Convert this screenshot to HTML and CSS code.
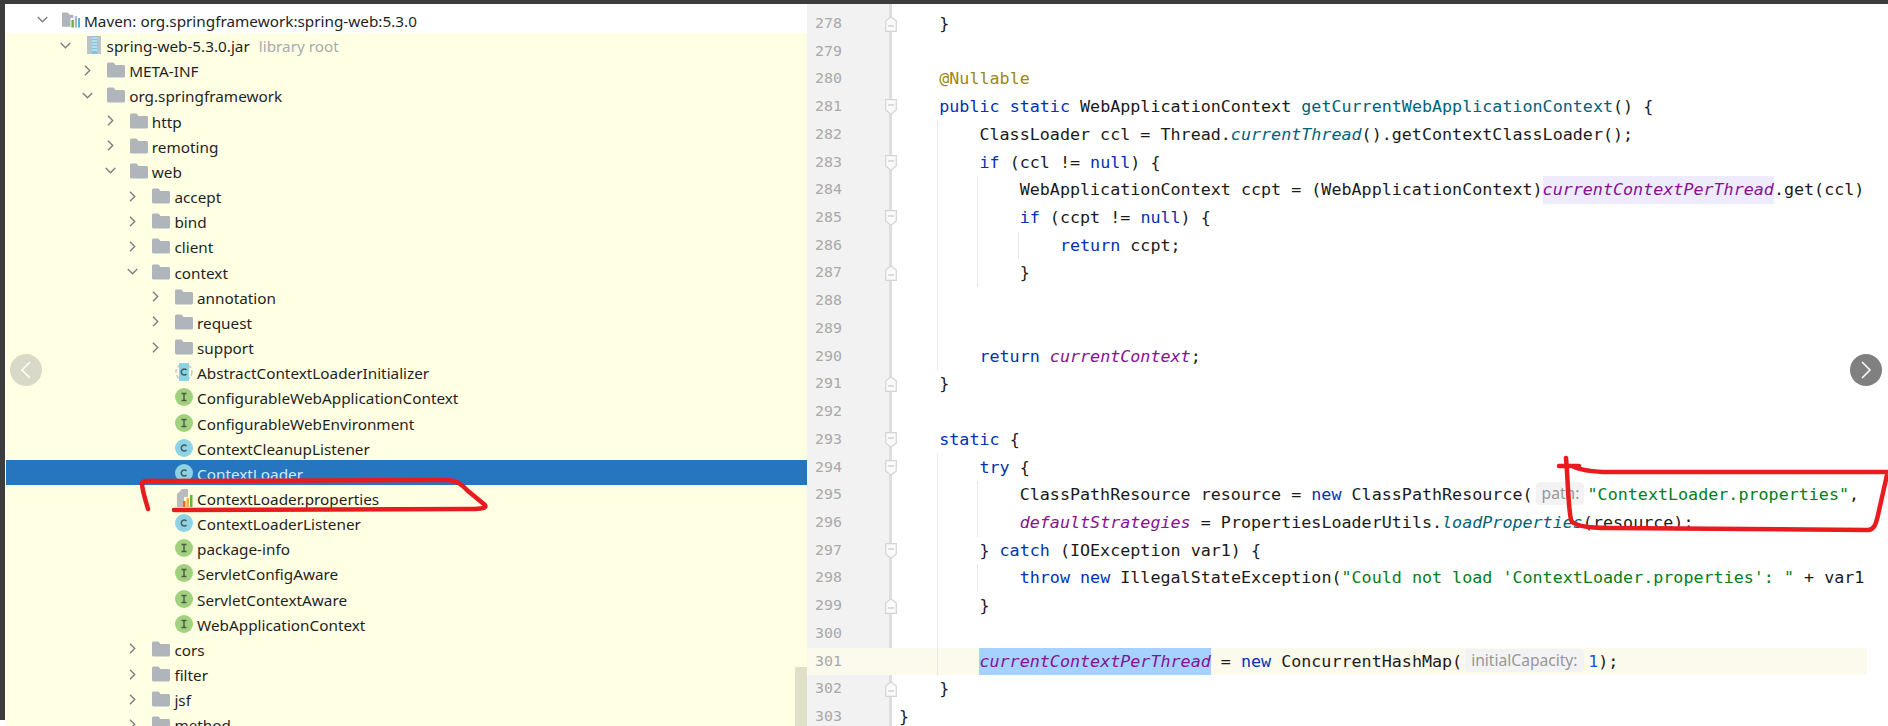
FILE: index.html
```html
<!DOCTYPE html>
<html lang="en">
<head>
  <meta charset="UTF-8">
  <title>ContextLoader.java</title>
  <link rel="stylesheet" href="styles.css">
</head>
<body>
  <svg class="defs" width="0" height="0">
    <symbol id="folder" viewBox="0 0 18 15"><path d="M0 1.5C0 .7.7 0 1.500 0H6.500L8.500 2.500H16.500C17.300 2.500 18 3.200 18 4V13.500C18 14.300 17.300 15 16.500 15H1.500C.7 15 0 14.300 0 13.500Z" fill="#afb5ba"/></symbol>
    <symbol id="maven" viewBox="0 0 19 16"><path d="M0 1C0 .4.4 0 1 0H6L8 2.500H12V6H9V15H0Z" fill="#afb5ba"/><rect x="10" y="8" width="2.500" height="8" fill="#62b543"/><rect x="13.500" y="4" width="2.500" height="12" fill="#afb5ba"/><rect x="17" y="6" width="2.500" height="10" fill="#40b6e0"/></symbol>
    <symbol id="jar" viewBox="0 0 14 18"><rect width="14" height="18" fill="#b9c4ca"/><rect x="5" width="5" height="18" fill="#7fc4dc"/><path d="M5 2H10M5 5H10M5 8H10M5 11H10M5 14H10" stroke="#eef6f8" stroke-width="1.200"/></symbol>
    <symbol id="cls" viewBox="0 0 18 18"><circle cx="9" cy="9" r="9" fill="#8cd3e6"/><path d="M11.500 7A3 3 0 1 0 11.500 11" fill="none" stroke="#4a5a60" stroke-width="1.500"/></symbol>
    <symbol id="abstract" viewBox="0 0 18 18"><circle cx="9" cy="9" r="8" fill="none" stroke="#c8c8c8" stroke-width="1.500" stroke-dasharray="4 2"/><rect x="4" y="0" width="10" height="18" fill="#8cd3e6"/><path d="M11.500 7A3 3 0 1 0 11.500 11" fill="none" stroke="#4a5a60" stroke-width="1.500"/></symbol>
    <symbol id="iface" viewBox="0 0 18 18"><circle cx="9" cy="9" r="9" fill="#a1d07f"/><path d="M6.500 5.500H11.500M6.500 12.500H11.500M9 5.500V12.500" fill="none" stroke="#4c5a44" stroke-width="1.400"/></symbol>
    <symbol id="props" viewBox="0 0 18 18"><path d="M2 5L7 0H13V8H9V18H2Z" fill="#b9bcbe"/><rect x="8" y="12" width="2.500" height="6" fill="#f26522"/><rect x="11.500" y="9" width="2.500" height="9" fill="#f4af3d"/><rect x="15" y="6" width="2.500" height="12" fill="#62b543"/></symbol>
    <symbol id="open" viewBox="0 0 10 6"><path d="M.7.7L5 5L9.300.7" fill="none" stroke="#7c7f82" stroke-width="1.300"/></symbol>
    <symbol id="shut" viewBox="0 0 6 10"><path d="M.7.7L5 5L.7 9.300" fill="none" stroke="#7c7f82" stroke-width="1.300"/></symbol>
    <symbol id="fold-down" viewBox="0 0 12 16"><path d="M.7.7H11.300V11L6 15.300L.7 11Z" fill="#fafafa" stroke="#d4d4d4" stroke-width="1.200"/><path d="M3 6H9" stroke="#c0c0c0"/></symbol>
    <symbol id="fold-up" viewBox="0 0 12 16"><path d="M.7 15.300H11.300V5L6 .7L.7 5Z" fill="#fafafa" stroke="#d4d4d4" stroke-width="1.200"/><path d="M3 10H9" stroke="#c0c0c0"/></symbol>
  </svg>

  <div class="topbar"></div>

  <div class="app">
    <div class="tree">
      <div class="row first l0"><svg class="arrow down"><use href="#open"/></svg><svg class="ico"><use href="#maven"/></svg><span>Maven: org.springframework:spring-web:5.3.0</span></div>
      <div class="row l1"><svg class="arrow down"><use href="#open"/></svg><svg class="ico"><use href="#jar"/></svg><span>spring-web-5.3.0.jar</span><span class="muted">library root</span></div>
      <div class="row l2"><svg class="arrow"><use href="#shut"/></svg><svg class="ico"><use href="#folder"/></svg><span>META-INF</span></div>
      <div class="row l2"><svg class="arrow down"><use href="#open"/></svg><svg class="ico"><use href="#folder"/></svg><span>org.springframework</span></div>
      <div class="row l3"><svg class="arrow"><use href="#shut"/></svg><svg class="ico"><use href="#folder"/></svg><span>http</span></div>
      <div class="row l3"><svg class="arrow"><use href="#shut"/></svg><svg class="ico"><use href="#folder"/></svg><span>remoting</span></div>
      <div class="row l3"><svg class="arrow down"><use href="#open"/></svg><svg class="ico"><use href="#folder"/></svg><span>web</span></div>
      <div class="row l4"><svg class="arrow"><use href="#shut"/></svg><svg class="ico"><use href="#folder"/></svg><span>accept</span></div>
      <div class="row l4"><svg class="arrow"><use href="#shut"/></svg><svg class="ico"><use href="#folder"/></svg><span>bind</span></div>
      <div class="row l4"><svg class="arrow"><use href="#shut"/></svg><svg class="ico"><use href="#folder"/></svg><span>client</span></div>
      <div class="row l4"><svg class="arrow down"><use href="#open"/></svg><svg class="ico"><use href="#folder"/></svg><span>context</span></div>
      <div class="row l5"><svg class="arrow"><use href="#shut"/></svg><svg class="ico"><use href="#folder"/></svg><span>annotation</span></div>
      <div class="row l5"><svg class="arrow"><use href="#shut"/></svg><svg class="ico"><use href="#folder"/></svg><span>request</span></div>
      <div class="row l5"><svg class="arrow"><use href="#shut"/></svg><svg class="ico"><use href="#folder"/></svg><span>support</span></div>
      <div class="row l5"><i class="arrow"></i><svg class="ico"><use href="#abstract"/></svg><span>AbstractContextLoaderInitializer</span></div>
      <div class="row l5"><i class="arrow"></i><svg class="ico"><use href="#iface"/></svg><span>ConfigurableWebApplicationContext</span></div>
      <div class="row l5"><i class="arrow"></i><svg class="ico"><use href="#iface"/></svg><span>ConfigurableWebEnvironment</span></div>
      <div class="row l5"><i class="arrow"></i><svg class="ico"><use href="#cls"/></svg><span>ContextCleanupListener</span></div>
      <div class="row l5 selected"><i class="arrow"></i><svg class="ico"><use href="#cls"/></svg><span>ContextLoader</span></div>
      <div class="row l5"><i class="arrow"></i><svg class="ico"><use href="#props"/></svg><span>ContextLoader.properties</span></div>
      <div class="row l5"><i class="arrow"></i><svg class="ico"><use href="#cls"/></svg><span>ContextLoaderListener</span></div>
      <div class="row l5"><i class="arrow"></i><svg class="ico"><use href="#iface"/></svg><span>package-info</span></div>
      <div class="row l5"><i class="arrow"></i><svg class="ico"><use href="#iface"/></svg><span>ServletConfigAware</span></div>
      <div class="row l5"><i class="arrow"></i><svg class="ico"><use href="#iface"/></svg><span>ServletContextAware</span></div>
      <div class="row l5"><i class="arrow"></i><svg class="ico"><use href="#iface"/></svg><span>WebApplicationContext</span></div>
      <div class="row l4"><svg class="arrow"><use href="#shut"/></svg><svg class="ico"><use href="#folder"/></svg><span>cors</span></div>
      <div class="row l4"><svg class="arrow"><use href="#shut"/></svg><svg class="ico"><use href="#folder"/></svg><span>filter</span></div>
      <div class="row l4"><svg class="arrow"><use href="#shut"/></svg><svg class="ico"><use href="#folder"/></svg><span>jsf</span></div>
      <div class="row l4"><svg class="arrow"><use href="#shut"/></svg><svg class="ico"><use href="#folder"/></svg><span>method</span></div>
      <div class="scrollbar"></div>
    </div>

    <div class="code">
      <div class="line"><span class="num">278</span><svg class="fold"><use href="#fold-up"/></svg><code class="src">    }</code></div>
      <div class="line"><span class="num">279</span><code class="src"></code></div>
      <div class="line"><span class="num">280</span><code class="src">    <b class="ann">@Nullable</b></code></div>
      <div class="line"><span class="num">281</span><svg class="fold"><use href="#fold-down"/></svg><code class="src">    <b class="kw">public static</b> WebApplicationContext <b class="fn">getCurrentWebApplicationContext</b>() {</code></div>
      <div class="line"><span class="num">282</span><code class="src g1">        ClassLoader ccl = Thread.<b class="call">currentThread</b>().getContextClassLoader();</code></div>
      <div class="line"><span class="num">283</span><svg class="fold"><use href="#fold-down"/></svg><code class="src g1">        <b class="kw">if</b> (ccl != <b class="kw">null</b>) {</code></div>
      <div class="line"><span class="num">284</span><code class="src g2">            WebApplicationContext ccpt = (WebApplicationContext)<b class="field mark">currentContextPerThread</b>.get(ccl)</code></div>
      <div class="line"><span class="num">285</span><svg class="fold"><use href="#fold-down"/></svg><code class="src g2">            <b class="kw">if</b> (ccpt != <b class="kw">null</b>) {</code></div>
      <div class="line"><span class="num">286</span><code class="src g3">                <b class="kw">return</b> ccpt;</code></div>
      <div class="line"><span class="num">287</span><svg class="fold"><use href="#fold-up"/></svg><code class="src g2">            }</code></div>
      <div class="line"><span class="num">288</span><code class="src g1"></code></div>
      <div class="line"><span class="num">289</span><code class="src g1"></code></div>
      <div class="line"><span class="num">290</span><code class="src g1">        <b class="kw">return</b> <b class="field">currentContext</b>;</code></div>
      <div class="line"><span class="num">291</span><svg class="fold"><use href="#fold-up"/></svg><code class="src">    }</code></div>
      <div class="line"><span class="num">292</span><code class="src"></code></div>
      <div class="line"><span class="num">293</span><svg class="fold"><use href="#fold-down"/></svg><code class="src">    <b class="kw">static</b> {</code></div>
      <div class="line"><span class="num">294</span><svg class="fold"><use href="#fold-down"/></svg><code class="src g1">        <b class="kw">try</b> {</code></div>
      <div class="line"><span class="num">295</span><code class="src g2">            ClassPathResource resource = <b class="kw">new</b> ClassPathResource(<span class="hint path">path:</span><b class="str">"ContextLoader.properties"</b>,</code></div>
      <div class="line"><span class="num">296</span><code class="src g2">            <b class="field">defaultStrategies</b> = PropertiesLoaderUtils.<b class="call">loadProperties</b>(resource);</code></div>
      <div class="line"><span class="num">297</span><svg class="fold"><use href="#fold-down"/></svg><code class="src g1">        } <b class="kw">catch</b> (IOException var1) {</code></div>
      <div class="line"><span class="num">298</span><code class="src g2">            <b class="kw">throw new</b> IllegalStateException(<b class="str">"Could not load 'ContextLoader.properties': "</b> + var1</code></div>
      <div class="line"><span class="num">299</span><svg class="fold"><use href="#fold-up"/></svg><code class="src g1">        }</code></div>
      <div class="line"><span class="num">300</span><code class="src g1"></code></div>
      <div class="line current"><span class="num">301</span><code class="src g1">        <b class="field picked">currentContextPerThread</b> = <b class="kw">new</b> ConcurrentHashMap(<span class="hint cap">initialCapacity:</span><b class="int">1</b>);</code></div>
      <div class="line"><span class="num">302</span><svg class="fold"><use href="#fold-up"/></svg><code class="src">    }</code></div>
      <div class="line"><span class="num">303</span><code class="src">}</code></div>
    </div>
  </div>

  <button class="nav prev"><svg width="12" height="20" viewBox="0 0 12 20"><path d="M10 2L2 10L10 18" fill="none" stroke="#fff" stroke-width="1.500"/></svg></button>
  <button class="nav next"><svg width="12" height="20" viewBox="0 0 12 20"><path d="M2 2L10 10L2 18" fill="none" stroke="#fff" stroke-width="1.500"/></svg></button>

  <!-- red pen marks on top of the screenshot -->
  <svg class="marks" width="1888" height="726" viewBox="0 0 1888 726">
    <path d="M148 509C145 498 142 490 142 483C143 480 150 481 165 481L447 480C456 480 462 484 468 491L485 505C487 508 482 509 470 509L174 510" />
    <path d="M1559 466L1579 466M1566 458C1568 480 1568 505 1571 520C1573 526 1590 528 1610 528L1868 530C1874 530 1876 524 1878 515L1887 475M1572 466C1580 470 1590 472 1610 472L1887 472" />
  </svg>
</body>
</html>
```
FILE: styles.css
```css
* {
  margin: 0;
  padding: 0;
  box-sizing: border-box;
}

html,
body {
  height: 726px;
  overflow: hidden;
}

body {
  position: relative;
  background: linear-gradient(#3c3c3c, #3c3c3c) 0 0 / 5px 720px no-repeat, #fff;
}

.defs {
  position: absolute;
}

.topbar {
  height: 4px;
  background-color: #3c3c3c;
}

.app {
  display: flex;
  height: 722px;
  padding-left: 6px;
}

/* project tree */
.tree {
  position: relative;
  flex: 0 0 801px;
  overflow: hidden;
  background-color: #ffffe4;
  font-family: "Noto Sans", sans-serif;
  font-size: 15.3px;
  color: #1f1f1f;
}

.row {
  display: flex;
  align-items: center;
  height: 25.17px;
  white-space: nowrap;
}

.row span {
  padding-top: 2px;
}

.row.first {
  height: 28.6px;
  padding-top: 3.4px;
  background-color: #fff;
}

.row.selected {
  background-color: #2675bf;
  color: #d3e9f7;
}

.l0 { padding-left: 29px; }
.l1 { padding-left: 51.6px; }
.l2 { padding-left: 74.2px; }
.l3 { padding-left: 96.8px; }
.l4 { padding-left: 119.4px; }
.l5 { padding-left: 142px; }

.arrow {
  flex: 0 0 7px;
  width: 7px;
  height: 11px;
  margin-right: 16px;
  margin-left: 4px;
}

.arrow.down {
  flex-basis: 11px;
  width: 11px;
  height: 7px;
  margin-right: 14px;
  margin-left: 2px;
}

.ico {
  flex: 0 0 18px;
  width: 18px;
  height: 18px;
  margin-right: 4px;
}

.muted {
  margin-left: 9px;
  color: #a9abad;
}

.scrollbar {
  position: absolute;
  right: 0;
  bottom: 0;
  width: 12px;
  height: 59px;
  background-color: #e0e0c8;
}

/* editor */
.code {
  flex: 0 0 1060px;
  overflow: hidden;
  padding-top: 6px;
  background: linear-gradient(90deg, #f2f2f2 82px, #dedede 82px, #dedede 85px, #fff 85px);
  font-family: "DejaVu Sans Mono", monospace;
  font-size: 16.72px;
  color: #1a1a1a;
}

.line {
  position: relative;
  display: flex;
  height: 27.72px;
  line-height: 27.72px;
}

.line.current {
  background-color: #fcfaed;
}

.num {
  flex: 0 0 85px;
  padding-left: 8px;
  font-size: 14.9px;
  color: #a9a9a9;
}

.fold {
  position: absolute;
  top: 6px;
  left: 78px;
  width: 12px;
  height: 16px;
}

.src {
  flex: 1;
  padding-left: 7px;
  font-family: inherit;
  font-size: inherit;
  white-space: pre;
  overflow: hidden;
}

.g1,
.g2,
.g3 {
  background-repeat: no-repeat;
  background-image:
    linear-gradient(#e6e6e6, #e6e6e6),
    linear-gradient(#e6e6e6, #e6e6e6),
    linear-gradient(#e6e6e6, #e6e6e6);
}

.g1 { background-size: 1px 100%, 0 0, 0 0; background-position: 45px 0, 0 0, 0 0; }
.g2 { background-size: 1px 100%, 1px 100%, 0 0; background-position: 45px 0, 85px 0, 0 0; }
.g3 { background-size: 1px 100%, 1px 100%, 1px 100%; background-position: 45px 0, 85px 0, 126px 0; }

.src b {
  font-weight: normal;
}

.kw { color: #0033b3; }
.ann { color: #9e880d; }
.fn { color: #00627a; }
.call { color: #00627a; font-style: italic; }
.field { color: #871094; font-style: italic; }
.str { color: #067d17; }
.int { color: #1750eb; }

.mark {
  display: inline-block;
  height: 28px;
  background-color: #edebfc;
}

.picked {
  display: inline-block;
  height: 28px;
  background-color: #a6d2ff;
}

.hint {
  display: inline-block;
  height: 23px;
  margin: 0 4px 0 3px;
  padding: 0 6px;
  border-radius: 4px;
  background-color: #f3f3f3;
  font-family: "Noto Sans", sans-serif;
  font-size: 15.6px;
  line-height: 22px;
  color: #979797;
  vertical-align: 1px;
}

.hint.path { width: 48px; }
.hint.cap { width: 119px; }

/* page overlays */
.nav {
  position: absolute;
  top: 354px;
  display: flex;
  align-items: center;
  justify-content: center;
  width: 32px;
  height: 32px;
  border: none;
  border-radius: 50%;
}

.nav.prev {
  left: 10px;
  background-color: #d9d9c8;
}

.nav.next {
  left: 1850px;
  background-color: #808080;
}

.marks {
  position: absolute;
  top: 0;
  left: 0;
  pointer-events: none;
  fill: none;
  stroke: #e81c1f;
  stroke-width: 4.500;
  stroke-linecap: round;
  stroke-linejoin: round;
}
```
